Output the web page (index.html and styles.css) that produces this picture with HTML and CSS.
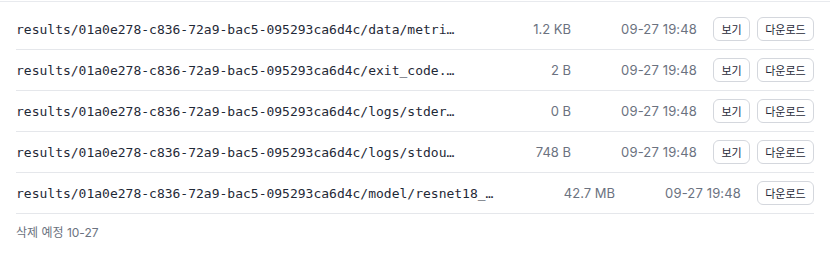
FILE: index.html
```html
<!DOCTYPE html>
<html lang="ko">
<head>
<meta charset="utf-8">
<link rel="stylesheet" href="styles.css">
</head>
<body>
<div class="panel">
  <ul class="files">
    <li class="row">
      <span class="name">results/01a0e278-c836-72a9-bac5-095293ca6d4c/data/metrics.json</span>
      <span class="size">1.2 KB</span>
      <span class="date">09-27 19:48</span>
      <span class="actions"><button class="btn btn-view">보기</button><button class="btn btn-dl">다운로드</button></span>
    </li>
    <li class="row">
      <span class="name">results/01a0e278-c836-72a9-bac5-095293ca6d4c/exit_code.txt</span>
      <span class="size">2 B</span>
      <span class="date">09-27 19:48</span>
      <span class="actions"><button class="btn btn-view">보기</button><button class="btn btn-dl">다운로드</button></span>
    </li>
    <li class="row">
      <span class="name">results/01a0e278-c836-72a9-bac5-095293ca6d4c/logs/stderr.log</span>
      <span class="size">0 B</span>
      <span class="date">09-27 19:48</span>
      <span class="actions"><button class="btn btn-view">보기</button><button class="btn btn-dl">다운로드</button></span>
    </li>
    <li class="row">
      <span class="name">results/01a0e278-c836-72a9-bac5-095293ca6d4c/logs/stdout.log</span>
      <span class="size">748 B</span>
      <span class="date">09-27 19:48</span>
      <span class="actions"><button class="btn btn-view">보기</button><button class="btn btn-dl">다운로드</button></span>
    </li>
    <li class="row">
      <span class="name">results/01a0e278-c836-72a9-bac5-095293ca6d4c/model/resnet18_final.pt</span>
      <span class="size">42.7 MB</span>
      <span class="date">09-27 19:48</span>
      <span class="actions"><button class="btn btn-dl">다운로드</button></span>
    </li>
  </ul>
  <p class="footer">삭제 예정 10-27</p>
</div>
</body>
</html>
```

FILE: styles.css
```css
* { box-sizing: border-box; }
html, body { margin: 0; padding: 0; background: #fff; }
body {
  font-family: Inter, "Noto Sans CJK KR", sans-serif;
  color: #1f2937;
}
.panel {
  margin-top: 1px;
  border-top: 1px solid #e8eaee;
  padding: 7px 16px 0 16px;
}
.files {
  list-style: none;
  margin: 0;
  padding: 0;
}
.row {
  display: flex;
  align-items: center;
  gap: 16px;
  height: 41px;
  border-bottom: 1px solid #e5e7eb;
}
.name {
  flex: 1;
  min-width: 0;
  white-space: nowrap;
  overflow: hidden;
  text-overflow: ellipsis;
  font-family: "DejaVu Sans Mono", monospace;
  font-size: 13px;
  color: #1f2937;
}
.size {
  width: 99px;
  text-align: right;
  font-size: 13px;
  color: #6b7280;
  white-space: nowrap;
}
.date {
  width: 110px;
  text-align: right;
  font-size: 13px;
  letter-spacing: 0.15px;
  color: #6b7280;
  white-space: nowrap;
}
.actions {
  display: flex;
  gap: 7px;
}
.btn {
  height: 24px;
  padding: 0;
  border: 1px solid #d4d7dd;
  border-radius: 6px;
  background: #fff;
  font-family: "Noto Sans CJK KR", sans-serif;
  font-size: 11px;
  color: #1f2937;
  line-height: 22px;
  text-align: center;
}
.btn-view { width: 37px; }
.btn-dl { width: 57px; }
.footer {
  margin: 0;
  padding-top: 9px;
  font-family: Inter, "Noto Sans CJK KR", sans-serif;
  font-size: 12px;
  color: #6b7280;
}
```
